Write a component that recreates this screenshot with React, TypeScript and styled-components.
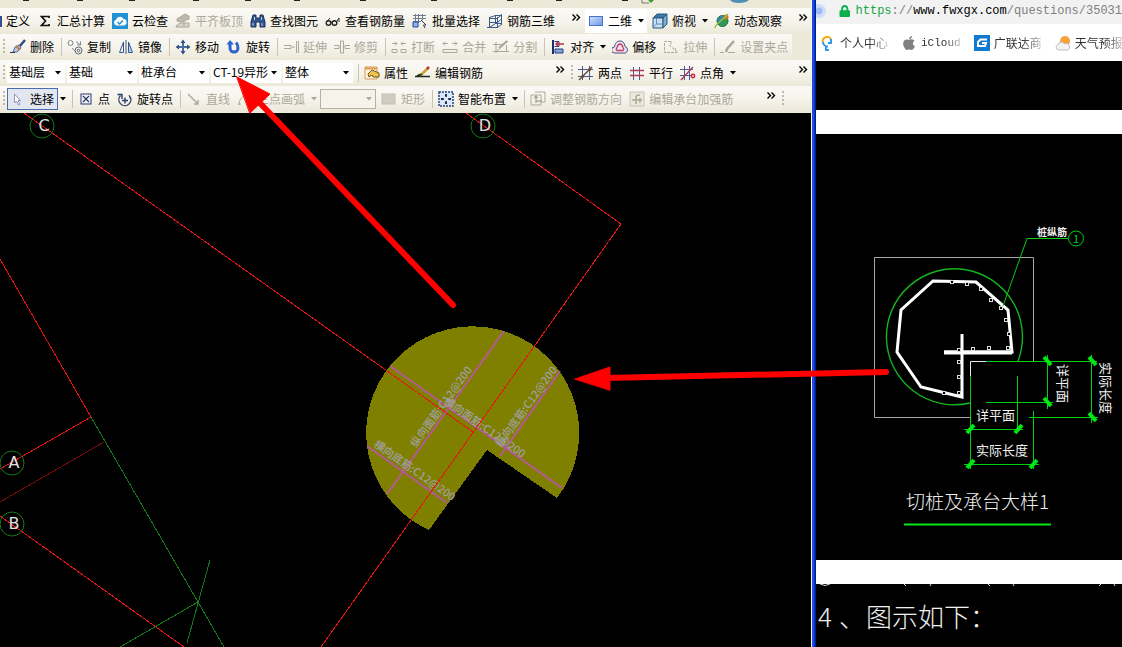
import React from "react";
import styled, { createGlobalStyle, css } from "styled-components";
import { FaApple, FaLock } from "react-icons/fa";

const GlobalStyle = createGlobalStyle`
  * { box-sizing: border-box; }
  body {
    margin: 0;
    background: #000;
    font-family: "Noto Sans CJK SC", "Liberation Sans", sans-serif;
    font-size: 12px;
    line-height: 16px;
  }
`;

const Desktop = styled.div`
  position: relative;
  display: flex;
  min-height: 100vh;
  overflow: hidden;
`;

const CadWindow = styled.section`
  display: flex;
  flex-direction: column;
  flex: 811 1 0;
  min-width: 0;
  background: #000;
`;

const WindowEdge = styled.div`
  flex: none;
  width: 5px;
  background: linear-gradient(90deg, #f4f2e8 0 1px, #1c50d8 1px 3px, #0a36c4 3px 4px, #001a9c 4px);
`;

const BrowserWindow = styled.section`
  display: flex;
  flex-direction: column;
  flex: 306 1 0;
  min-width: 0;
  background: #fff;
`;

const Toolbars = styled.header`
  background: #ece9d8;
  padding-bottom: 1px;
  overflow: hidden;
`;

const MenuStrip = styled.div`
  height: 8px;
  svg { display: block; }
`;

const ToolRow = styled.div`
  display: flex;
  height: 26px;
`;

const ToolGroup = styled.div<{ $basis?: number; $fit?: boolean }>`
  display: flex;
  align-items: center;
  height: 26px;
  background: linear-gradient(180deg, #fbfaf7 0%, #f5f3ea 55%, #ebe8d9 100%);
  ${(p) =>
    p.$fit
      ? css`flex: none;`
      : p.$basis
        ? css`flex: none; width: ${p.$basis}px;`
        : css`flex: 1; min-width: 0;`}
`;

const Grip = styled.span`
  flex: none;
  width: 2px;
  height: 16px;
  margin: 0 2px 0 3px;
  background: repeating-linear-gradient(180deg, #bfbba9 0 2px, transparent 2px 4px);
`;

const Separator = styled.span`
  flex: none;
  width: 1px;
  height: 18px;
  margin: 0 2px 0 3px;
  background: #c9c5b4;
`;

const Tool = styled.button<{ $active?: boolean; $flush?: boolean }>`
  display: flex;
  flex: none;
  align-items: center;
  gap: 4px;
  height: 22px;
  padding: 0 4px 0 ${(p) => (p.$flush ? 0 : 3)}px;
  border: 0;
  background: none;
  color: #000;
  font: inherit;
  white-space: nowrap;
  &:disabled { color: #aca899; }
  svg { flex: none; }
  ${(p) =>
    p.$active &&
    css`
      background: #e1e6f0;
      box-shadow: inset 0 0 0 1px #4a6cb0;
    `}
`;

const CaretButton = styled.button`
  flex: none;
  display: flex;
  align-items: center;
  justify-content: center;
  width: 11px;
  height: 22px;
  padding: 0;
  border: 0;
  background: none;
  color: #000;
  &:disabled { color: #aca899; }
`;

const More = styled.button`
  flex: none;
  align-self: flex-start;
  width: 16px;
  height: 18px;
  margin-left: auto;
  padding: 0;
  border: 0;
  background: none;
  display: flex;
  align-items: center;
  justify-content: center;
`;

const ComboBox = styled.span<{ $width: number; $disabled?: boolean }>`
  position: relative;
  flex: none;
  width: ${(p) => p.$width}px;
  height: 20px;
  margin-right: 2px;
  background: ${(p) => (p.$disabled ? "#f5f3ea" : "#fff")};
  box-shadow: ${(p) => (p.$disabled ? "inset 0 0 0 1px #b5b2a4" : "none")};
  svg {
    position: absolute;
    right: 3px;
    top: 8px;
    pointer-events: none;
    color: ${(p) => (p.$disabled ? "#aca899" : "#000")};
  }
`;

const ComboSelect = styled.select`
  appearance: none;
  display: block;
  width: 100%;
  height: 18px;
  padding: 0 12px 0 2px;
  border: 0;
  background: transparent;
  color: #000;
  font: inherit;
  line-height: 18px;
`;

const ViewChoice = styled.span`
  display: flex;
  align-items: center;
  height: 24px;
  margin: 0 2px 0 1px;
  background: #fff;
`;

const Canvas = styled.svg`
  display: block;
  flex: 1 0 534px;
  width: 100%;
`;

const AddressBar = styled.div`
  display: flex;
  align-items: center;
  height: 24px;
  padding-bottom: 3px;
  gap: 5px;
  background: #f2f2f2;
  overflow: hidden;
`;

const SiteBadge = styled.span`
  flex: none;
  width: 10px;
  height: 14px;
  margin-right: 8px;
  border-radius: 0 7px 7px 0;
  background: radial-gradient(circle at 3px 7px, #9dbcf5 0 3px, #cfdffb 4px 7px);
`;

const UrlLink = styled.a`
  color: #808080;
  font: 12px/16px "Liberation Mono", monospace;
  text-decoration: none;
  white-space: nowrap;
`;
const Scheme = styled.span`color: #18a548;`;
const Host = styled.span`color: #000;`;

const Bookmarks = styled.nav`
  display: flex;
  align-items: center;
  gap: 13px;
  height: 37px;
  padding: 4px 0 3px 4px;
  overflow: hidden;
`;

const Bookmark = styled.a<{ $mono?: boolean }>`
  display: flex;
  flex: none;
  align-items: center;
  gap: 4px;
  color: #333;
  text-decoration: none;
  ${(p) => p.$mono && css`font: 11px/16px "Liberation Mono", monospace;`}
  svg { flex: none; }
  span {
    mask-image: linear-gradient(90deg, #000 60%, rgba(0, 0, 0, 0.25) 100%);
  }
`;

const Figure = styled.div<{ $height: number; $grow?: boolean }>`
  flex: ${(p) => (p.$grow ? 1 : 0)} 0 ${(p) => p.$height}px;
  background: #000;
  svg { display: block; width: 100%; height: ${(p) => p.$height}px; }
`;

const Spacer = styled.div`
  flex: none;
  height: 24px;
  background: #fff;
`;

const Markup = styled.svg`
  position: absolute;
  inset: 0;
  width: 100%;
  height: 100%;
  pointer-events: none;
`;

const Icon = ({ children, w = 16 }: { children: React.ReactNode; w?: number }) => (
  <svg width={w} height="16" viewBox={`0 0 ${w} 16`} fill="none" stroke="currentColor" aria-hidden="true">
    {children}
  </svg>
);

const Caret = () => (
  <svg width="7" height="4" viewBox="0 0 7 4" aria-hidden="true">
    <path d="M0 0H6L3 3.5Z" fill="currentColor" />
  </svg>
);

const MoreTools = () => (
  <More aria-label="更多">
    <svg width="9" height="7" viewBox="0 0 9 7" fill="none" stroke="#000" strokeWidth="1.4" aria-hidden="true">
      <path d="M0.5 0.5L3.5 3.5L0.5 6.5M4.5 0.5L7.5 3.5L4.5 6.5" />
    </svg>
  </More>
);

const icons = {
  edge: <Icon w={2}><path d="M0 3H2V14H0Z" fill="#34508c" stroke="none" /></Icon>,
  sum: <Icon><path d="M12 5V3.5H4.5L8.5 8L4.5 12.5H12V11" stroke="#111" strokeWidth="1.7" /></Icon>,
  cloud: (
    <Icon>
      <rect width="16" height="16" fill="#2391d6" stroke="none" />
      <path d="M4.500 12.500A3 3 0 0 1 4 6.700A4 4 0 0 1 11.500 6A3.300 3.300 0 0 1 12 12.500Z" fill="#fff" stroke="none" />
      <path d="M5.500 9L7.500 11L11 7.500" stroke="#2391d6" strokeWidth="1.500" />
    </Icon>
  ),
  slab: (
    <Icon>
      <path d="M2 6L10 1L14 3V6L6 9L2 8Z" fill="#bdb9ad" stroke="#aaa698" />
      <path d="M1 13L5 10H14V14H1ZM9 8V13" stroke="#aaa698" fill="#d8d5c8" />
    </Icon>
  ),
  binoculars: (
    <Icon>
      <path d="M3 2H6V5H10V2H13L15 9V14H10V9H6V14H1V9Z" fill="#31548e" stroke="#1c2f5c" />
      <path d="M3 10V13M12 10V13M4.500 4V7M11.500 4V7" stroke="#b8d0ee" />
    </Icon>
  ),
  glasses: (
    <Icon>
      <circle cx="3.500" cy="10" r="2.300" stroke="#222" strokeWidth="1.400" />
      <circle cx="9.500" cy="10" r="2.300" stroke="#222" strokeWidth="1.400" />
      <path d="M1.500 9L5 5M11.500 9L14 5V9M5.500 9H7.500" stroke="#333" />
    </Icon>
  ),
  batch: (
    <Icon>
      <path d="M1 2.500H14M1 5.500H14M1 8.500H9M3.500 1V13M6.500 1V10M10.500 1V7" stroke="#6d7b93" />
      <path d="M1 9H6V14H1Z" fill="#8eb5f0" stroke="#2748a0" />
      <path d="M9 7L14 12L11.500 12L13 15" stroke="#26375e" />
    </Icon>
  ),
  mesh: (
    <Icon>
      <path d="M2.500 4V15M8.500 2V11M14.500 1V12M2.500 4.500L8.500 2.500H15M2.500 14.500L8.500 10.500H15M0 14.500H10M10.500 4V15M2.500 5.500H10L14.500 2M2.500 9.500H10.500L14.500 6M10.500 14.500L15 11" stroke="#3c5a8e" />
    </Icon>
  ),
  plane: (
    <Icon>
      <defs>
        <linearGradient id="planeFill" x1="0" y1="0" x2="1" y2="1">
          <stop stopColor="#d4e2fc" /><stop offset="1" stopColor="#6b95e8" />
        </linearGradient>
      </defs>
      <rect x="1.500" y="3.500" width="13" height="9" fill="url(#planeFill)" stroke="#4a70c8" />
    </Icon>
  ),
  cube: (
    <Icon>
      <path d="M1 5L5 1H15L11 5Z" fill="#3f78a8" stroke="#24567f" />
      <path d="M1 5H11V15H1Z" fill="#c9dff0" stroke="#24567f" />
      <path d="M11 5L15 1V11L11 15Z" fill="#7fabd0" stroke="#24567f" />
      <path d="M4.500 5V11H11M4.500 11L1.500 14" stroke="#5e8fb8" />
    </Icon>
  ),
  orbit: (
    <Icon>
      <circle cx="8.500" cy="8" r="5.500" fill="#2f9a45" stroke="#1d6b54" />
      <path d="M4 8A5 5 0 0 1 9 3L7 8L9 12Z" fill="#3a82c8" stroke="none" />
      <circle cx="12" cy="4" r="2.500" fill="#e06a2a" stroke="none" />
      <path d="M1 15C1 11 8 8 14 1" stroke="#8cc63e" strokeWidth="1.500" />
    </Icon>
  ),
  brush: (
    <Icon>
      <path d="M15 1L9 8" stroke="#3a4a78" strokeWidth="2.500" />
      <path d="M5 8L9 6L11 9L7 13L3 13Z" fill="#b9c6ec" stroke="#5466a8" />
      <path d="M6 7L10 11" stroke="#c07a4a" strokeWidth="2" />
      <path d="M0 13.500H5" stroke="#3a3a3a" />
    </Icon>
  ),
  copy: (
    <Icon>
      <circle cx="3.500" cy="4" r="2.500" stroke="#7f8795" />
      <circle cx="11.500" cy="11.500" r="3.500" stroke="#5a6578" />
      <circle cx="11.500" cy="11.500" r="1.300" stroke="#5a6578" />
      <path d="M9 2.500L13.500 6M13.500 2.500V6H10M5 9L8 12" stroke="#7f8795" />
    </Icon>
  ),
  mirror: (
    <Icon>
      <path d="M5.500 3V13.500H1.500Z" stroke="#33558f" />
      <path d="M10.500 3V13.500H14.500Z" fill="#b8cdea" stroke="#33558f" />
      <path d="M8 1V15" stroke="#33558f" />
    </Icon>
  ),
  move: (
    <Icon>
      <path d="M8 2V14M2 8H14" stroke="#4d6c9e" strokeWidth="2" />
      <path d="M8 0.500L10.500 4H5.500ZM8 15.500L10.500 12H5.500ZM0.500 8L4 5.500V10.500ZM15.500 8L12 5.500V10.500Z" fill="#2d4f86" stroke="none" />
    </Icon>
  ),
  rotate: (
    <Icon>
      <path d="M4 5V9A4 4 0 0 0 12 9C12 6.500 11.500 5 10 3.500" stroke="#2f62cc" strokeWidth="3" />
      <path d="M0.500 5.500L4 1L8 5.500Z" fill="#2f62cc" stroke="none" />
    </Icon>
  ),
  extend: <Icon><path d="M1 6.500H8V9.500H1M9 8H12M13.500 2V14M15.500 2V14" /></Icon>,
  trim: <Icon><path d="M0 6.500H5V9.500H0M16 6.500H11V9.500H16M6.500 2V14H9.500V2Z" /></Icon>,
  breakLine: <Icon><path d="M1 4.500H6M10 4.500H15M4 2.500L6 4.500L4 6.500M12 2.500L10 4.500L12 6.500M1 10.500H6V13.500H1ZM15 10.500H10V13.500H15Z" /></Icon>,
  merge: <Icon><path d="M1 4.500H6M10 4.500H15M3 2.500L1 4.500L3 6.500M13 2.500L15 4.500L13 6.500M1 10.500H15V13.500H1Z" /></Icon>,
  split: <Icon><path d="M0 5.500H9M0 12.500H16M3 3V14M13.500 6V12M4 12L15 2" /><path d="M6 9L14 2" strokeWidth="2" /></Icon>,
  align: (
    <Icon>
      <path d="M3 1V15" stroke="#1c2f6c" strokeWidth="2" />
      <path d="M4.500 2.500H9V7.500H4.500" stroke="#24427f" />
      <path d="M6 5H14M8 3L6 5L8 7" stroke="#c03048" strokeWidth="1.400" />
      <path d="M5 10H13V14H5Z" fill="#86a4dc" stroke="#24427f" />
    </Icon>
  ),
  offset: (
    <Icon>
      <path d="M2.500 14A3 3 0 0 1 2.500 8C3 4 5 2 8 2S12.500 4 13 7.500A3.500 3.500 0 0 1 13.500 14Z" stroke="#4a4e78" fill="#e8e2f2" />
      <path d="M5 11.500A2 2 0 0 1 5 8.500C5.500 6.500 6.500 5 8 5S10.500 6.500 11 8.500A2 2 0 0 1 11 11.500Z" stroke="#c8405c" strokeWidth="1.300" />
    </Icon>
  ),
  stretch: <Icon><path d="M8 2.500H1.500V13.500H14L12 9M8 2.500V6M6 6L13 12" strokeDasharray="3 1" /></Icon>,
  gripPoint: <Icon><path d="M0 13.500H4M8 13.500H12M12 13.500H15" /><path d="M14 2L7 10L6 13" strokeWidth="2.500" /></Icon>,
  properties: (
    <Icon>
      <path d="M1 2H13V14H1Z" fill="#fdf2dc" stroke="#e09a52" />
      <path d="M1 3.500H13" stroke="#e09a52" strokeWidth="2" />
      <path d="M4 9L8 5L15 8V12L9 12L8 10L5 12Z" fill="#f0c54e" stroke="#6a5428" />
    </Icon>
  ),
  editRebar: (
    <Icon>
      <path d="M0 11.500H15M2 11L6 9" stroke="#222" strokeWidth="1.500" />
      <path d="M6 10L13 3" stroke="#d0a030" strokeWidth="2.500" />
      <path d="M12 4L14 2" stroke="#b03838" strokeWidth="2.500" />
      <path d="M5 11L7 9" stroke="#2d6a2d" strokeWidth="2" />
    </Icon>
  ),
  twoPoint: (
    <Icon>
      <path d="M0 4.500H15M0 11.500H15M4.500 1V15M11.500 1V15" stroke="#545a8a" />
      <path d="M1 15L14 2" stroke="#5c4a3a" strokeWidth="1.400" />
      <circle cx="4.500" cy="11.500" r="1.500" fill="#6a4a30" stroke="none" />
      <circle cx="11.500" cy="4.500" r="1.500" fill="#6a4a30" stroke="none" />
    </Icon>
  ),
  parallel: (
    <Icon>
      <path d="M4.500 2V15M10.500 2V15" stroke="#4a5a94" />
      <path d="M1 5.500H15M1 10.500H15" stroke="#b03a50" strokeWidth="1.400" />
    </Icon>
  ),
  angle: (
    <Icon>
      <path d="M0 4.500H13M0 10.500H11M4.500 1V15M9.500 1V15" stroke="#4a5a94" />
      <path d="M1 15L13 2" stroke="#b03a50" strokeWidth="1.400" />
      <circle cx="13" cy="11" r="1.700" stroke="#cc2038" strokeWidth="1.400" />
    </Icon>
  ),
  pointer: (
    <Icon>
      <path d="M4.500 3V12L6.500 10L8.500 14L10 13L8 9.500H10.500Z" fill="#fff" stroke="#8a98b8" />
    </Icon>
  ),
  point: (
    <Icon>
      <rect x="3" y="3" width="10" height="10" stroke="#28377a" />
      <path d="M5 5L11 11M11 5L5 11" stroke="#28377a" strokeWidth="1.200" />
    </Icon>
  ),
  rotatePoint: (
    <Icon>
      <path d="M3.500 4.500A6 6 0 1 0 13 5.500" stroke="#3a4a66" strokeWidth="1.400" />
      <path d="M0.500 3.500H5V8M5 9.500H11M8 6.500V12.500" stroke="#2a3c70" strokeWidth="1.400" />
      <path d="M12 4L13.500 8" stroke="#2a3c70" />
    </Icon>
  ),
  line: <Icon><path d="M2 3L12 13M12 9V13H8" strokeWidth="1.400" /></Icon>,
  arc: <Icon><path d="M2 14C2 8 6 3 13 3" /><path d="M1 13H4M12 2H15" /></Icon>,
  rect: <Icon><rect x="1" y="3" width="13" height="10" fill="#d0cdc0" stroke="#c4c0b2" /></Icon>,
  smart: (
    <Icon>
      <rect x="1" y="1" width="14" height="14" fill="#dbe7fa" stroke="#26447e" strokeDasharray="2 1" strokeWidth="1.500" />
      <path d="M8 3V6M8 10V13M3 8H6M10 8H13M7 4H9M7 12H9M4 7V9M12 7V9" stroke="#121a38" strokeWidth="1.400" />
    </Icon>
  ),
  direction: <Icon><path d="M1 4H11V14H1ZM5 1H15V11H11" /><path d="M6 12V5M4 7L6 5L8 7M6 10H12" strokeWidth="1.400" /></Icon>,
  capRebar: <Icon><path d="M1 1H15V15H1Z" fill="#eceade" stroke="#c8c4b6" /><path d="M3 9H13M7 13V6C7 4 9 4 11 4M11 7V12" strokeWidth="1.500" /></Icon>,
};

type ToolProps = { icon: React.ReactNode; label: string; off?: boolean; active?: boolean; flush?: boolean };
const ToolButton = ({ icon, label, off, active, flush }: ToolProps) => (
  <Tool disabled={off} $active={active} $flush={flush}>{icon}{label}</Tool>
);

const Drop = ({ label, off }: { label: string; off?: boolean }) => (
  <CaretButton aria-label={label} disabled={off}><Caret /></CaretButton>
);

const Combo = ({ label, value, width = 70, off }: { label: string; value: string; width?: number; off?: boolean }) => (
  <ComboBox $width={width} $disabled={off}>
    <ComboSelect aria-label={label} disabled={off} defaultValue={value}>
      <option>{value}</option>
    </ComboSelect>
    <Caret />
  </ComboBox>
);

const menuMarks = [23, 77, 129, 193, 245, 294, 360, 431, 507, 556, 622];

const EditorToolbars = () => (
  <Toolbars>
    <MenuStrip>
      <svg width="760" height="8" aria-hidden="true">
        {menuMarks.map((x) => <path key={x} d={`M${x} 0.500h6`} stroke="#222" />)}
        <path d="M642 0V3H649" stroke="#777" fill="none" />
        <path d="M648 0H654L651 3Z" fill="#3ca028" />
        <path d="M730 0H749Q746 3 739 3T730 0Z" fill="#4f8fb5" />
      </svg>
    </MenuStrip>
    <ToolRow>
      <ToolGroup $basis={584}>
        <ToolButton icon={icons.edge} label="定义" flush />
        <ToolButton icon={icons.sum} label="汇总计算" />
        <ToolButton icon={icons.cloud} label="云检查" />
        <ToolButton icon={icons.slab} label="平齐板顶" off />
        <ToolButton icon={icons.binoculars} label="查找图元" />
        <ToolButton icon={icons.glasses} label="查看钢筋量" />
        <ToolButton icon={icons.batch} label="批量选择" />
        <ToolButton icon={icons.mesh} label="钢筋三维" />
        <MoreTools />
      </ToolGroup>
      <ToolGroup>
        <ViewChoice>
          <ToolButton icon={icons.plane} label="二维" />
          <Drop label="二维选项" />
        </ViewChoice>
        <ToolButton icon={icons.cube} label="俯视" />
        <Drop label="俯视选项" />
        <ToolButton icon={icons.orbit} label="动态观察" />
        <MoreTools />
      </ToolGroup>
    </ToolRow>
    <ToolRow>
      <ToolGroup $fit>
        <Grip />
        <ToolButton icon={icons.brush} label="删除" />
        <Separator />
        <ToolButton icon={icons.copy} label="复制" />
        <ToolButton icon={icons.mirror} label="镜像" />
        <Separator />
        <ToolButton icon={icons.move} label="移动" />
        <ToolButton icon={icons.rotate} label="旋转" />
        <Separator />
        <ToolButton icon={icons.extend} label="延伸" off />
        <ToolButton icon={icons.trim} label="修剪" off />
        <Separator />
        <ToolButton icon={icons.breakLine} label="打断" off />
        <ToolButton icon={icons.merge} label="合并" off />
        <ToolButton icon={icons.split} label="分割" off />
        <Separator />
        <ToolButton icon={icons.align} label="对齐" />
        <Drop label="对齐选项" />
        <ToolButton icon={icons.offset} label="偏移" />
        <ToolButton icon={icons.stretch} label="拉伸" off />
        <Separator />
        <ToolButton icon={icons.gripPoint} label="设置夹点" off />
      </ToolGroup>
    </ToolRow>
    <ToolRow>
      <ToolGroup $basis={568}>
        <Grip />
        <Combo label="楼层" value="基础层" width={58} />
        <Combo label="构件类别" value="基础" />
        <Combo label="构件类型" value="桩承台" />
        <Combo label="构件名称" value="CT-19异形" />
        <Combo label="显示范围" value="整体" />
        <Separator />
        <ToolButton icon={icons.properties} label="属性" />
        <ToolButton icon={icons.editRebar} label="编辑钢筋" />
        <MoreTools />
      </ToolGroup>
      <ToolGroup>
        <Grip />
        <ToolButton icon={icons.twoPoint} label="两点" />
        <ToolButton icon={icons.parallel} label="平行" />
        <ToolButton icon={icons.angle} label="点角" />
        <Drop label="点角选项" />
        <MoreTools />
      </ToolGroup>
    </ToolRow>
    <ToolRow>
      <ToolGroup $basis={779}>
        <Grip />
        <ToolButton icon={icons.pointer} label="选择" active />
        <Drop label="选择选项" />
        <Separator />
        <ToolButton icon={icons.point} label="点" />
        <ToolButton icon={icons.rotatePoint} label="旋转点" />
        <Separator />
        <ToolButton icon={icons.line} label="直线" off />
        <ToolButton icon={icons.arc} label="三点画弧" off />
        <Drop label="画弧选项" off />
        <Combo label="弧参数" value="" width={56} off />
        <ToolButton icon={icons.rect} label="矩形" off />
        <Separator />
        <ToolButton icon={icons.smart} label="智能布置" />
        <Drop label="智能布置选项" />
        <Separator />
        <ToolButton icon={icons.direction} label="调整钢筋方向" off />
        <ToolButton icon={icons.capRebar} label="编辑承台加强筋" off />
        <MoreTools />
      </ToolGroup>
      <ToolGroup><Grip /></ToolGroup>
    </ToolRow>
  </Toolbars>
);

const axes = [
  { name: "C", x: 42, y: 126 },
  { name: "D", x: 483, y: 126 },
  { name: "A", x: 12, y: 463 },
  { name: "B", x: 12, y: 524 },
];

const rebarLabels = [
  { x: 443, y: 403, angle: 35, text: "横向面筋:C12@200" },
  { x: 373, y: 446, angle: 35, text: "横向底筋:C12@200" },
  { x: 416, y: 448, angle: -54, text: "纵向面筋:C12@200" },
  { x: 501, y: 448, angle: -54, text: "纵向底筋:C12@200" },
];

const ModelCanvas = () => (
  <Canvas role="img" aria-label="桩承台平面">
    <g transform="translate(0 -113)" fill="none">
      <path d="M487 450L557 498A106.500 106.500 0 1 0 429 530Z" fill="#7f7f00" shapeRendering="crispEdges" />
      <g stroke="#b45a96" strokeWidth="2">
        <path d="M390 366L562 488M504 331L387 494M560 371L500 456M367 446L447 503" />
      </g>
      <g fill="#a0a0a0" fontSize="11" fontWeight="500">
        {rebarLabels.map((l) => (
          <text key={l.x} transform={`translate(${l.x} ${l.y}) rotate(${l.angle})`}>{l.text}</text>
        ))}
      </g>
      <g stroke="#e81414" shapeRendering="crispEdges">
        <path d="M24 113L473 432M466 113L621 224L321 647M0 259L91 417L0 469M0 516L184 647" />
        <path d="M0 502L104 442" stroke="#7a0c0c" />
        <path d="M91 417L224 647M210 560L187 643M198 602L120 647" stroke="#147a1c" />
      </g>
      {axes.map((a) => (
        <g key={a.name}>
          <circle cx={a.x} cy={a.y} r="12" stroke="#147a1c" />
          <text x={a.x + 2} y={a.y + 5} textAnchor="middle" fill="#e0e0e0" fontSize="16" fontFamily="DejaVu Sans, sans-serif">
            {a.name}
          </text>
        </g>
      ))}
    </g>
  </Canvas>
);

const rebarDots = [
  [952, 282], [967, 284], [981, 289], [991, 300], [1001, 308], [1006, 320], [1009, 334], [1008, 348],
  [989, 348], [973, 349], [959, 350], [959, 362], [959, 377], [944, 393], [959, 393],
];

const ticksDown = [[1047, 361], [1047, 402], [1092, 361], [1092, 417]];
const ticksUp = [[970, 429], [1018, 429], [970, 464], [1033, 464]];

const PileDetail = () => (
  <svg role="img" aria-label="切桩及承台大样1">
    <g transform="translate(-816 -134)" fill="none">
      <path d="M1033.500 361V257.500H874.500V417.500H970" stroke="#a8a8a8" />
      <path d="M1018 361A68 68 0 1 0 970 403" stroke="#14b41e" strokeWidth="1.400" />
      <path d="M944 352H1012L1008 310L976 282L933 281L901 310L897 352L921 387L962 397V334" stroke="#fff" strokeWidth="3" />
      <path d="M944 352.500H1012" stroke="#fff" strokeWidth="4" />
      {rebarDots.map(([x, y]) => (
        <rect key={`${x}-${y}`} x={x - 1.5} y={y - 1.5} width="3" height="3" fill="#000" stroke="#ddd" />
      ))}
      <path d="M970.500 376V361.500H986" stroke="#e8e8e8" />
      <g stroke="#00d010">
        <path d="M1003 306L1027 238.500H1068" />
        <circle cx="1076" cy="238.500" r="7.500" />
        <path d="M986 361.500H1097M970.500 376V469M1017.500 376V432M986 402.500H1053M1033.500 411V469M1029 417.500H1098" />
        <path d="M1047.500 355V409M1091.500 355V423M964 429.500H1023M964 464.500H1039" />
      </g>
      <g stroke="#00e814" strokeWidth="4">
        {ticksDown.map(([x, y]) => <path key={`${x}-${y}`} d={`M${x - 3} ${y - 4}L${x + 4} ${y + 4}`} />)}
        {ticksUp.map(([x, y]) => <path key={`${x}-${y}`} d={`M${x - 3} ${y + 4}L${x + 4} ${y - 4}`} />)}
      </g>
      <path d="M904 524.500H1051" stroke="#00e814" strokeWidth="2" />
      <text x="1076" y="243" textAnchor="middle" fontSize="11" fill="#00d010">1</text>
      <g fill="#f0f0f0" fontSize="13">
        <text x="1037" y="236" fontSize="10" fontWeight="700">桩纵筋</text>
        <text x="976" y="420">详平面</text>
        <text x="976" y="455">实际长度</text>
        <text transform="translate(1058 364) rotate(90)">详平面</text>
        <text transform="translate(1101 362) rotate(90)">实际长度</text>
        <text x="906" y="509" fontSize="19" fontWeight="300">切桩及承台大样1</text>
      </g>
    </g>
  </svg>
);

const NextNote = () => (
  <svg role="img" aria-label="4、图示如下：">
    <g transform="translate(-816 -584)" fill="#f0f0f0" fontSize="26" fontWeight="300">
      <path d="M820 584Q825 587 830 584M904 584L906 586M931 584L930 586M988 584L990 586M1013 584L1014 586M1101 584L1099 586M1114 584L1115 586" stroke="#ddd" fill="none" />
      <text x="818" y="627">4</text>
      <text x="839" y="627">、</text>
      <text x="866" y="627">图示如下：</text>
    </g>
  </svg>
);

const Browser = () => (
  <BrowserWindow>
    <AddressBar>
      <SiteBadge />
      <FaLock size={12} color="#0eae4e" aria-hidden="true" />
      <UrlLink href="#address">
        <Scheme>https</Scheme>://<Host>www.fwxgx.com</Host>/questions/35031
      </UrlLink>
    </AddressBar>
    <Bookmarks aria-label="书签">
      <Bookmark href="#profile">
        <Icon>
          <path d="M3 8A4.500 4.500 0 0 1 11 4" stroke="#f5a81c" strokeWidth="2" />
          <path d="M3 7A4.500 4.500 0 0 0 8 11.500M11 4V8H8" stroke="#2f9be8" strokeWidth="2" />
          <path d="M6 11V15H9" stroke="#2f9be8" strokeWidth="2" />
        </Icon>
        <span>个人中心</span>
      </Bookmark>
      <Bookmark href="#icloud" $mono>
        <FaApple size={16} color="#808080" aria-hidden="true" />
        <span>iCloud</span>
      </Bookmark>
      <Bookmark href="#glodon">
        <Icon>
          <rect width="16" height="16" fill="#1079d0" stroke="none" />
          <path d="M13 4.500H6.500L4 7V11H11L12 8H8" stroke="#fff" strokeWidth="2" />
        </Icon>
        <span>广联达商</span>
      </Bookmark>
      <Bookmark href="#weather">
        <Icon>
          <circle cx="10" cy="6" r="5" fill="#f9a13a" stroke="none" />
          <path d="M3 15A3 3 0 0 1 3 9.500A3.500 3.500 0 0 1 9.500 9A3 3 0 0 1 13 15Z" fill="#f4f4f4" stroke="#bdbdbd" />
        </Icon>
        <span>天气预报</span>
      </Bookmark>
    </Bookmarks>
    <Figure $height={49} />
    <Spacer />
    <Figure $height={426}><PileDetail /></Figure>
    <Spacer />
    <Figure $height={63} $grow><NextNote /></Figure>
  </BrowserWindow>
);

const App = () => (
  <>
    <GlobalStyle />
    <Desktop>
      <CadWindow>
        <EditorToolbars />
        <ModelCanvas />
      </CadWindow>
      <WindowEdge />
      <Browser />
      <Markup aria-hidden="true">
        <g fill="#f00" stroke="#f00" strokeLinecap="round">
          <path d="M453 305L258 101" strokeWidth="6" />
          <path d="M237 77L270 94L250 113Z" strokeWidth="1" />
          <path d="M886 372L604 378" strokeWidth="6" />
          <path d="M575 379L610 367V390Z" strokeWidth="1" />
        </g>
      </Markup>
    </Desktop>
  </>
);

export default App;
